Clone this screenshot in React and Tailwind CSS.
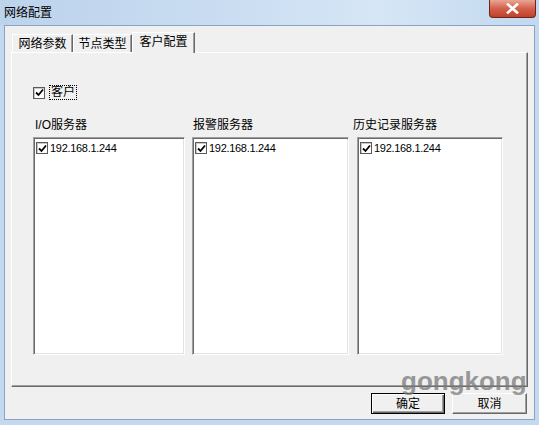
export default function App() {
  const font = { fontFamily: '"Liberation Sans", "Noto Sans CJK SC", sans-serif' };
  const Check = () => (
    <div className="w-[12px] h-[12px] bg-white border border-[#5a5a5a] shadow-[inset_1px_1px_0_#c8c8c8] flex items-center justify-center shrink-0">
      <svg width="9" height="9" viewBox="0 0 9 9">
        <path d="M1 4.5 L3.5 7 L8 1.5" stroke="#000" strokeWidth="1.8" fill="none" />
      </svg>
    </div>
  );
  const Box = ({ w }) => (
    <div
      className="h-[218px] bg-white border border-t-[#a0a0a0] border-l-[#a0a0a0] border-r-white border-b-white shadow-[inset_1px_1px_0_#696969,inset_-1px_-1px_0_#e3e3e3] pl-[2px] pt-[4px]"
      style={{ width: w }}
    >
      <div className="flex items-center gap-[2px] h-[12px]">
        <Check />
        <span className="text-[11px] leading-[12px] tracking-[-0.3px] text-black">192.168.1.244</span>
      </div>
    </div>
  );
  return (
    <div className="w-[539px] h-[425px] bg-[#c4d8ef] flex flex-col relative overflow-hidden" style={font}>
      <div className="h-[25px] shrink-0 flex items-center pl-[4px] text-[12px] text-black bg-[linear-gradient(to_right,#bcd3ec,#c9dcf1_40%,#d6e6f6_70%,#c2d8ef)]">
        网络配置
      </div>
      <div className="absolute top-0 right-[3px] w-[47px] h-[18px] rounded-b-[4px] border border-t-0 border-[#6e2418] bg-[linear-gradient(to_bottom,#e9a595,#d3614b_50%,#c0402a)] flex items-center justify-center">
        <svg width="13" height="11" viewBox="0 0 13 11">
          <path d="M2 1.5 L11 9.5 M11 1.5 L2 9.5" stroke="#fff" strokeWidth="2.6" strokeLinecap="square" />
        </svg>
      </div>
      <div className="mx-[4px] h-[395px] border border-[#8aa3c3] bg-[#f0f0f0] pl-[6px] pt-[6px] flex flex-col">
        <div className="flex items-end h-[20px] relative z-10 pl-[1px]">
          <div className="h-[18px] w-[61px] border-t border-l border-white border-r border-r-[#696969] shadow-[inset_-1px_0_0_#a0a0a0] flex items-center justify-center text-[12px] text-black">
            网络参数
          </div>
          <div className="h-[18px] w-[59px] border-t border-l border-white border-r border-r-[#696969] shadow-[inset_-1px_0_0_#a0a0a0] flex items-center justify-center text-[12px] text-black">
            节点类型
          </div>
          <div className="h-[21px] -mb-px w-[63px] bg-[#f0f0f0] border-t border-l border-white border-r border-r-[#696969] shadow-[inset_-1px_0_0_#a0a0a0] flex items-center justify-center text-[12px] text-black pb-[2px]">
            客户配置
          </div>
        </div>
        <div className="w-[517px] h-[335px] border border-t-white border-l-white border-r-[#696969] border-b-[#696969] shadow-[inset_-1px_-1px_0_#a0a0a0] pl-[21px] pt-[33px]">
          <div className="flex items-center h-[13px]">
            <Check />
            <span className="ml-[4px] text-[12px] leading-[13px] text-black border border-dotted border-black px-[1px]">客户</span>
          </div>
          <div className="flex mt-[19px]">
            <div className="w-[152px]">
              <div className="h-[19px] pl-[2px] text-[12px] leading-[14px] text-black">I/O服务器</div>
              <Box w={152} />
            </div>
            <div className="w-[157px] ml-[7px]">
              <div className="h-[19px] pl-[1px] text-[12px] leading-[14px] text-black">报警服务器</div>
              <Box w={157} />
            </div>
            <div className="w-[146px] ml-[8px]">
              <div className="h-[19px] -ml-[4px] text-[12px] leading-[14px] text-black whitespace-nowrap">历史记录服务器</div>
              <Box w={146} />
            </div>
          </div>
        </div>
        <div className="flex justify-end gap-[7px] pr-[7px] mt-[6px]">
          <div className="w-[74px] h-[21px] border border-black bg-[#f0f0f0] shadow-[inset_1px_1px_0_#fff,inset_-1px_-1px_0_#696969,inset_-2px_-2px_0_#a0a0a0] flex items-center justify-center text-[12px] text-black">
            确定
          </div>
          <div className="w-[75px] h-[21px] border border-t-white border-l-white border-r-[#696969] border-b-[#696969] bg-[#f0f0f0] shadow-[inset_-1px_-1px_0_#a0a0a0] flex items-center justify-center text-[12px] text-black">
            取消
          </div>
        </div>
      </div>
      <div className="absolute left-[401px] top-[366px] text-[26px] font-bold text-[#7a7a7a] opacity-75 leading-[30px] pointer-events-none" style={{ fontFamily: '"Liberation Sans", sans-serif' }}>
        gongkong
      </div>
    </div>
  );
}
